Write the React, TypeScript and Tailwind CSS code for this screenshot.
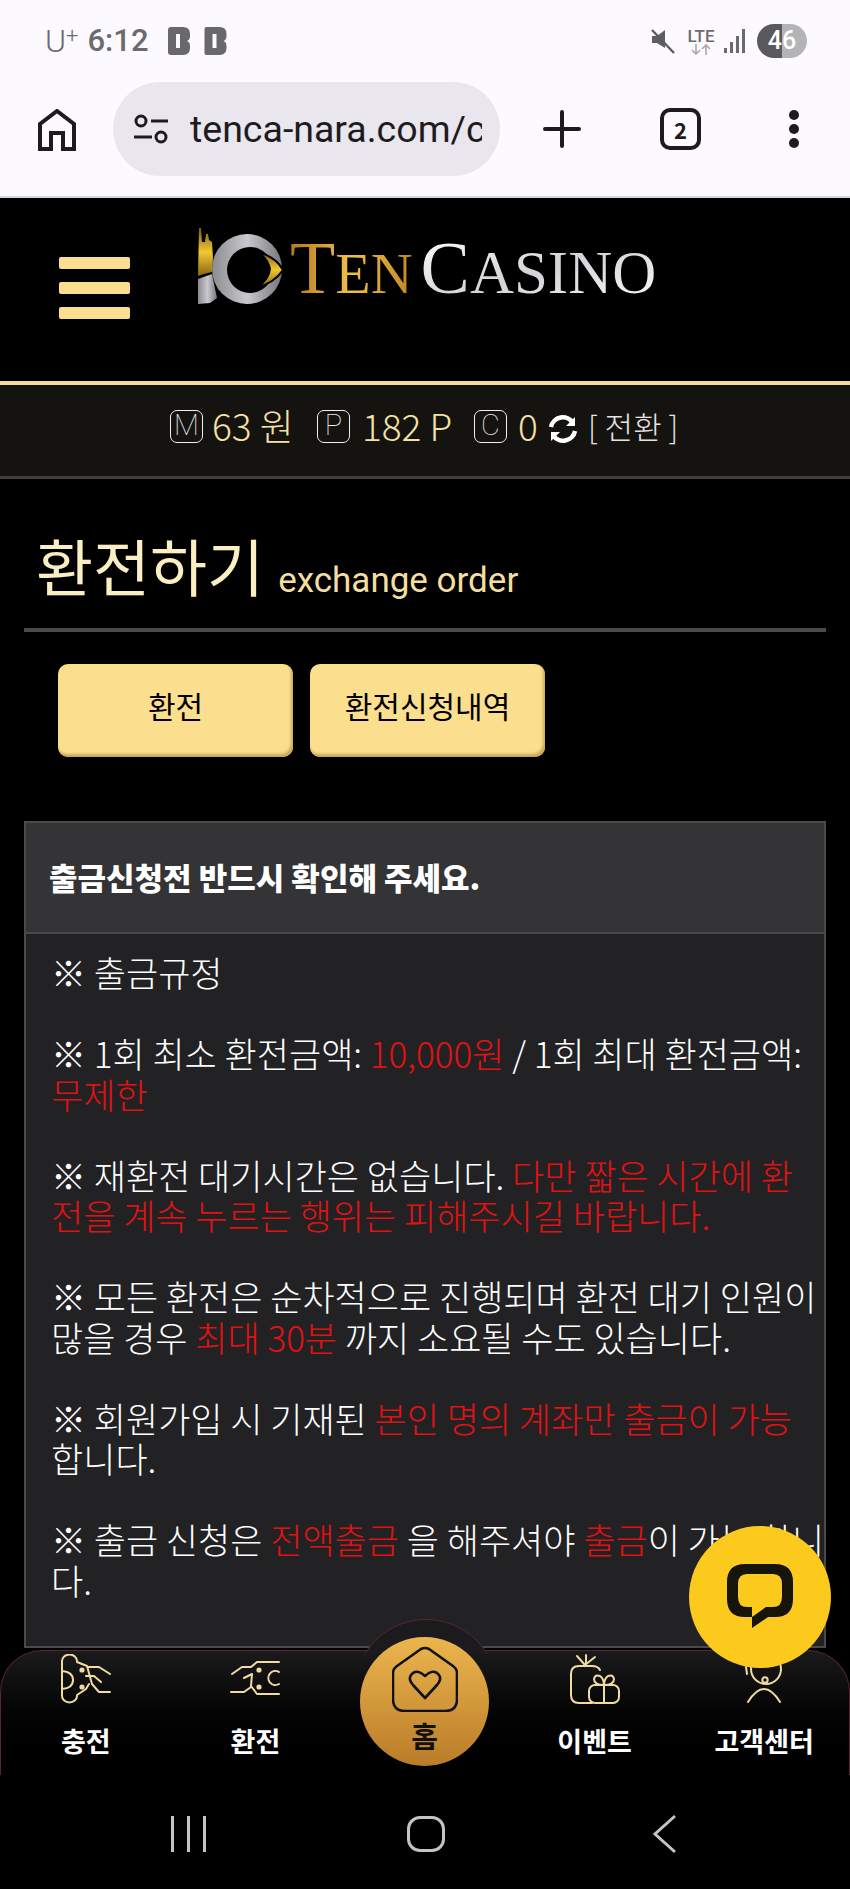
import React from 'react';

const KR = "font-['Noto_Sans_CJK_KR','Noto_Sans',sans-serif]";
const RED = 'text-[#e01212]';

const StatusBar = () => (
  <div className="h-[76px] flex items-end justify-between pl-[45px] pr-[43px] pb-[15px] text-[#6b6a6e] font-['Roboto',sans-serif]">
    <div className="flex items-center h-[40px]">
      <span className="text-[32px] font-light mr-[9px]">U<sup className="text-[22px] -top-[9px]">+</sup></span>
      <span className="text-[31px] font-medium mr-[20px] w-[60px]">6:12</span>
      <svg width="24" height="28" viewBox="0 0 22 28" className="mr-[13px]">
        <path d="M3 0H15Q22 0 22 7V9Q22 13 19 14Q22 15 22 19V21Q22 28 15 28H3Q0 28 0 25V3Q0 0 3 0Z" fill="#69686c" />
        <rect x="8" y="7" width="4" height="14" fill="#fcfaff" />
      </svg>
      <svg width="23" height="28" viewBox="0 0 22 28">
        <path d="M2 0H15Q22 0 22 7V9Q22 13 19 14Q22 15 22 19V21Q22 28 15 28H2Q0 28 0 26V2Q0 0 2 0Z" fill="#69686c" />
        <rect x="8" y="7" width="4" height="14" fill="#fcfaff" />
      </svg>
    </div>
    <div className="flex items-center h-[40px]">
      <svg width="24" height="26" viewBox="0 0 24 26" className="mr-[12px]">
        <path d="M1 8H6L14 2V20L6 15H1Z" fill="#5e5d61" />
        <path d="M1 2L23 25" stroke="#5e5d61" strokeWidth="2.5" />
      </svg>
      <div className="w-[28px] mr-[9px] flex flex-col items-center leading-none">
        <span className="text-[17px] font-medium text-[#6b6a6e] -mb-[1px]">LTE</span>
        <svg width="20" height="11" viewBox="0 0 20 11">
          <path d="M5 0V10M1 6L5 10L9 6M15 11V1M11 5L15 1L19 5" stroke="#a9a8ac" strokeWidth="1.6" fill="none" />
        </svg>
      </div>
      <svg width="22" height="24" viewBox="0 0 22 24" className="mr-[11px]">
        <rect x="0" y="19" width="3" height="5" fill="#6b6a6e" />
        <rect x="6" y="13" width="3" height="11" fill="#6b6a6e" />
        <rect x="12" y="7" width="3" height="17" fill="#6b6a6e" />
        <rect x="18" y="0" width="3" height="24" fill="#6b6a6e" />
      </svg>
      <div className="w-[50px] h-[34px] rounded-full overflow-hidden flex items-center justify-center text-white text-[25px] font-medium bg-linear-to-r from-[#5a595d] from-50% to-[#b4b3b7] to-50%">
        46
      </div>
    </div>
  </div>
);

const Toolbar = () => (
  <div className="h-[122px] flex items-start border-b-[2px] border-[#d8d6dc]">
    <svg width="38" height="42" viewBox="0 0 38 42" className="ml-[38px] mt-[33px] shrink-0" fill="none" stroke="#1d1b20" strokeWidth="4">
      <path d="M2 40V15L19 2L36 15V40H25V24H13V40Z" strokeLinejoin="miter" />
    </svg>
    <div className="ml-[37px] mt-[6px] w-[387px] h-[94px] shrink-0 rounded-[47px] bg-[#e9e6ee] flex items-center pl-[20px]">
      <svg width="36" height="30" viewBox="0 0 36 30" fill="none" stroke="#1d1b20" strokeWidth="3" className="shrink-0">
        <circle cx="8" cy="7" r="5" />
        <path d="M18 7H35M1 23H19" />
        <circle cx="28" cy="23" r="5" />
      </svg>
      <div className="ml-[21px] w-[292px] shrink-0 overflow-hidden whitespace-nowrap text-[37.5px] leading-[46px] text-[#1d1b20] font-['Roboto',sans-serif]">
        tenca-nara.com/c
      </div>
    </div>
    <svg width="38" height="38" viewBox="0 0 38 38" className="ml-[43px] mt-[34px] shrink-0" stroke="#1d1b20" strokeWidth="4" strokeLinecap="round">
      <path d="M19 2V36M2 19H36" />
    </svg>
    <div className={`ml-[79px] mt-[32px] w-[41px] h-[42px] rounded-[10px] border-[4px] border-[#1d1b20] flex items-center justify-center text-[22px] font-bold text-[#1d1b20] ${KR}`}>
      2
    </div>
    <div className="ml-[88px] mt-[34px] flex flex-col gap-[4px]">
      <span className="w-[10px] h-[10px] rounded-full bg-[#1d1b20]" />
      <span className="w-[10px] h-[10px] rounded-full bg-[#1d1b20]" />
      <span className="w-[10px] h-[10px] rounded-full bg-[#1d1b20]" />
    </div>
  </div>
);

const LogoMark = () => (
  <svg width="86" height="78" viewBox="0 0 86 78" className="shrink-0">
    <defs>
      <linearGradient id="goldMark" x1="0" y1="0" x2="0" y2="1">
        <stop offset="0" stopColor="#7a5a10" />
        <stop offset="0.5" stopColor="#f2c832" />
        <stop offset="1" stopColor="#8a6512" />
      </linearGradient>
      <linearGradient id="silverMark" x1="0" y1="0" x2="1" y2="0">
        <stop offset="0" stopColor="#8c8c90" />
        <stop offset="0.5" stopColor="#c9c9cd" />
        <stop offset="1" stopColor="#77777b" />
      </linearGradient>
    </defs>
    <path d="M0 48L1 0L3 0L4 14L7 14L8 6L10 6L11 12L14 14L15 30L14 44L6 46Z" fill="url(#goldMark)" />
    <path d="M0 76V51L14 46L19 70L12 75Z" fill="url(#silverMark)" />
    <circle cx="49" cy="41" r="35" fill="url(#silverMark)" />
    <circle cx="52" cy="42" r="23" fill="#000" />
    <path d="M60 24Q78 29 85 42Q76 55 60 59Q71 51 72 41Q70 31 60 24Z" fill="url(#goldMark)" stroke="#000" strokeWidth="2" />
  </svg>
);

const Header = () => (
  <div className="h-[183px] bg-black flex items-start">
    <div className="ml-[59px] mt-[59px] w-[71px] flex flex-col gap-[13px]">
      <span className="h-[12px] rounded-[2px] bg-[#fbdf8e]" />
      <span className="h-[12px] rounded-[2px] bg-[#fbdf8e]" />
      <span className="h-[12px] rounded-[2px] bg-[#fbdf8e]" />
    </div>
    <div className="ml-[68px] mt-[30px] flex items-start">
      <LogoMark />
      <div className="ml-[6px] mt-[2px] h-[76px] flex items-baseline font-['Liberation_Serif',serif] whitespace-nowrap">
        <span className="text-[74px] leading-[76px] text-transparent bg-clip-text bg-linear-to-r from-[#b57a1c] via-[#f0c04a] to-[#c08722]">
          T<span className="text-[58px]">EN</span>
        </span>
        <span className="ml-[8px] text-[74px] leading-[76px] text-transparent bg-clip-text bg-linear-to-br from-[#ffffff] via-[#d4d4d8] to-[#ffffff]">
          C<span className="text-[61px]">ASINO</span>
        </span>
      </div>
    </div>
  </div>
);

const Badge = ({ ch }: { ch: string }) => (
  <span className="w-[33px] h-[33px] rounded-[7px] border border-[#f0f0f0] flex items-center justify-center text-[29px] font-thin text-[#f0f0f0] font-['Roboto',sans-serif]">
    {ch}
  </span>
);

const Balance = () => (
  <div className="h-[98px] border-t-[4px] border-[#f3dc9a] border-b-[3px] border-b-[#3f3f3f] bg-[#14130f] flex items-center pb-[9px] pl-[170px] text-[#f6e2a6] font-['Roboto',sans-serif]">
    <Badge ch="M" />
    <span className={`ml-[9px] w-[105px] text-[37px] ${KR} font-light`}>63 원</span>
    <Badge ch="P" />
    <span className={`ml-[12px] w-[112px] text-[37px] ${KR} font-light`}>182 P</span>
    <Badge ch="C" />
    <span className={`ml-[11px] w-[30px] text-[37px] ${KR} font-light`}>0</span>
    <svg width="30" height="30" viewBox="0 0 30 30" fill="none" stroke="#fff" strokeWidth="4.5" className="mt-[6px]">
      <path d="M3 13A12 12 0 0 1 25 9" />
      <path d="M27 3V12H18" fill="#fff" stroke="none" />
      <path d="M27 17A12 12 0 0 1 5 21" />
      <path d="M3 27V18H12" fill="#fff" stroke="none" />
    </svg>
    <span className={`ml-[10px] text-[31px] text-[#e4e4e4] whitespace-pre ${KR} font-light`}>[ 전환 ]</span>
  </div>
);

const TitleRow = () => (
  <div className="mx-[24px] h-[153px] border-b-[4px] border-[#4a4a4e] flex items-end pb-[25px] pl-[12px]">
    <h1 className={`text-[62px] leading-[76px] font-normal text-[#fbeec2] ${KR}`}>환전하기</h1>
    <span className="ml-[14px] -mb-[2px] text-[35px] leading-[48px] text-[#f3df9f] font-['Roboto',sans-serif]">exchange order</span>
  </div>
);

const Tabs = () => (
  <div className={`pl-[58px] pt-[32px] flex gap-[17px] ${KR}`}>
    {['환전', '환전신청내역'].map((t) => (
      <button
        key={t}
        className="w-[235px] h-[93px] pb-[10px] rounded-[10px] bg-[#fbdf8e] text-black text-[30px] shadow-[inset_-2px_-3px_3px_#c8a65c]"
      >
        {t}
      </button>
    ))}
  </div>
);

const Notice = () => (
  <div className={`mx-[24px] mt-[64px] h-[827px] border-[2px] border-[#4a4a4a] bg-[#222225] text-white ${KR}`}>
    <div className="h-[111px] bg-[#343335] border-b-[2px] border-[#4a4a4a] flex items-center pl-[23px] text-[31px] font-black">
      출금신청전 반드시 확인해 주세요.
    </div>
    <div className="pt-[18px] pl-[25px] text-[35px] leading-[40.5px] font-light whitespace-nowrap">
      <p>※ 출금규정</p>
      <br />
      <p>※ 1회 최소 환전금액: <span className={RED}>10,000원</span> / 1회 최대 환전금액:</p>
      <p className={RED}>무제한</p>
      <br />
      <p>※ 재환전 대기시간은 없습니다. <span className={RED}>다만 짧은 시간에 환</span></p>
      <p className={RED}>전을 계속 누르는 행위는 피해주시길 바랍니다.</p>
      <br />
      <p>※ 모든 환전은 순차적으로 진행되며 환전 대기 인원이</p>
      <p>많을 경우 <span className={RED}>최대 30분</span> 까지 소요될 수도 있습니다.</p>
      <br />
      <p>※ 회원가입 시 기재된 <span className={RED}>본인 명의 계좌만 출금이 가능</span></p>
      <p>합니다.</p>
      <br />
      <p>※ 출금 신청은 <span className={RED}>전액출금</span> 을 해주셔야 <span className={RED}>출금</span>이 가능 합니</p>
      <p>다.</p>
    </div>
  </div>
);

const NavIcon = ({ children }: { children: React.ReactNode }) => (
  <svg width="50" height="50" viewBox="0 0 50 50" fill="none" stroke="#f0dca0" strokeWidth="2" strokeLinecap="round" strokeLinejoin="round">
    {children}
  </svg>
);

const navLeft = [
  {
    label: '충전',
    icon: (
      <NavIcon>
        <path d="M16 7A7.5 6.5 0 0 0 1 7V42A7.5 6.5 0 0 0 16 42" />
        <path d="M1 17Q12 18 12 26Q12 34 1 35" />
        <path d="M16 8L26 12L31 30L38 38H49" />
        <path d="M16 41L25 35L28 30" />
        <path d="M27 13H38L49 20" />
        <path d="M25 22H33L40 28" />
        <circle cx="21" cy="16" r="1.6" fill="#f0dca0" />
        <circle cx="21" cy="33" r="1.6" fill="#f0dca0" />
      </NavIcon>
    ),
  },
  {
    label: '환전',
    icon: (
      <NavIcon>
        <path d="M49 8H27L21 13H12L2 20" />
        <path d="M49 40H27L21 32L22 20L14 24" />
        <path d="M1 38H14L21 33" />
        <path d="M49 18A7 7 0 1 0 49 30" />
        <circle cx="29" cy="16" r="1.6" fill="#f0dca0" />
        <circle cx="29" cy="33" r="1.6" fill="#f0dca0" />
      </NavIcon>
    ),
  },
];

const navRight = [
  {
    label: '이벤트',
    icon: (
      <NavIcon>
        <path d="M30 16Q28 12 22 12H9Q1 12 1 20V41Q1 49 9 49H22" />
        <path d="M7 2L15 11M16 1V11M25 3L15 11" />
        <rect x="19" y="31" width="30" height="18" rx="6" />
        <path d="M34 31V49" />
        <path d="M34 31Q24 31 24 25Q25 20 30 22Q34 25 34 31Q34 25 38 22Q43 20 44 25Q44 31 34 31Z" />
      </NavIcon>
    ),
  },
  {
    label: '고객센터',
    icon: (
      <NavIcon>
        <circle cx="27" cy="15" r="15" />
        <path d="M7 13L8 20" />
        <circle cx="26" cy="26" r="2.7" />
        <path d="M9 48Q25 22 41 48" />
      </NavIcon>
    ),
  },
];

const NavItem = ({ label, icon }: { label: string; icon: React.ReactNode }) => (
  <div className="flex flex-col items-center pt-[3px]">
    {icon}
    <span className="mt-[18px] text-[27px] leading-[38px] font-bold text-white">{label}</span>
  </div>
);

const BottomNav = () => (
  <div className={`relative mt-[2px] h-[125px] rounded-t-[42px] border-t border-x border-[#5a2530] bg-linear-to-b from-[#1b1b1d] to-black grid grid-cols-5 ${KR}`}>
    <div className="absolute left-[353px] -top-[32px] w-[144px] h-[144px] rounded-full border border-[#5a2530] bg-[#1b1b1d] [clip-path:inset(0_0_76%_0)]" />
    {navLeft.map((n) => (
      <NavItem key={n.label} {...n} />
    ))}
    <div className="relative">
      <div className="absolute left-[20px] -top-[14px] w-[129px] h-[129px] rounded-full bg-linear-to-b from-[#ecb64e] to-[#b97c28] flex flex-col items-center pt-[9px]">
        <svg width="66" height="66" viewBox="-1 -1 66 66" fill="none" stroke="#111" strokeWidth="2.6" strokeLinejoin="round">
          <path d="M4 19L28 2Q32 0 36 2L60 19Q64 22 64 26V52Q64 64 52 64H12Q0 64 0 52V26Q0 22 4 19Z" />
          <path d="M32 51L20 38Q15 32 18 28Q23 21 32 29Q41 21 46 28Q49 32 44 38Z" />
        </svg>
        <span className="mt-[6px] text-[29px] leading-[34px] font-bold text-[#111]">홈</span>
      </div>
    </div>
    {navRight.map((n) => (
      <NavItem key={n.label} {...n} />
    ))}
  </div>
);

const SystemNav = () => (
  <div className="h-[114px] relative bg-black">
    <div className="absolute left-[171px] top-[41px] flex gap-[13px]">
      <span className="w-[3px] h-[36px] bg-[#c4c4c8]" />
      <span className="w-[3px] h-[36px] bg-[#c4c4c8]" />
      <span className="w-[3px] h-[36px] bg-[#c4c4c8]" />
    </div>
    <div className="absolute left-[407px] top-[41px] w-[38px] h-[36px] rounded-[13px] border-[3px] border-[#c4c4c8]" />
    <svg width="26" height="40" viewBox="0 0 26 40" className="absolute left-[652px] top-[39px]" fill="none" stroke="#c4c4c8" strokeWidth="3">
      <path d="M23 2L3 20L23 38" />
    </svg>
  </div>
);

export default function App() {
  return (
    <div className="relative w-[850px] h-[1889px] overflow-hidden bg-black">
      <div className="bg-[#fcfaff]">
        <StatusBar />
        <Toolbar />
      </div>
      <Header />
      <Balance />
      <TitleRow />
      <Tabs />
      <Notice />
      <BottomNav />
      <SystemNav />
      <button className="absolute left-[689px] top-[1526px] w-[142px] h-[142px] rounded-full bg-[#fcca1c] flex items-center justify-center">
        <svg width="66" height="64" viewBox="0 0 66 64" className="-mt-[2px]">
          <path
            fillRule="evenodd"
            fill="#17140c"
            d="M18 0H48Q66 0 66 18V35Q66 53 48 53H41L25 64V53H18Q0 53 0 35V18Q0 0 18 0ZM20 10Q11 10 11 20V33Q11 43 20 43H25V53L39 43H46Q55 43 55 33V20Q55 10 46 10Z"
          />
        </svg>
      </button>
    </div>
  );
}
